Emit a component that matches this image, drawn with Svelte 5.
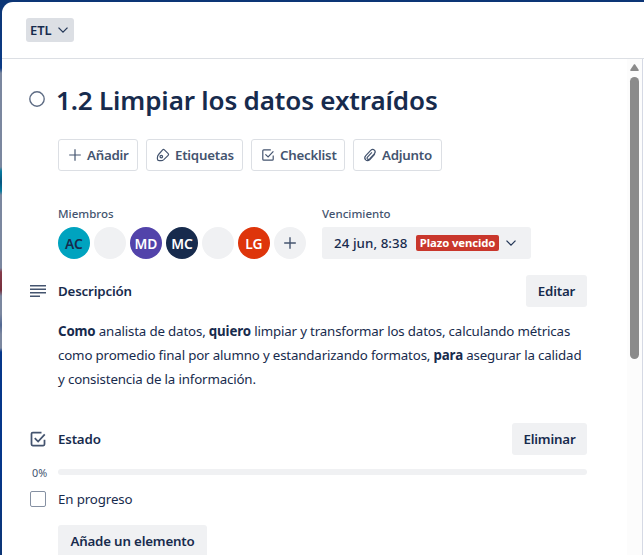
<script>
  const members = [
    { initials: 'AC', bg: '#00a3bf', fg: '#172b4d' },
    { initials: '', bg: '#f0f1f3', fg: '#172b4d' },
    { initials: 'MD', bg: '#5243aa', fg: '#ffffff' },
    { initials: 'MC', bg: '#172b4d', fg: '#ffffff' },
    { initials: '', bg: '#f0f1f3', fg: '#172b4d' },
    { initials: 'LG', bg: '#de350b', fg: '#ffffff' }
  ];
</script>

{#snippet chevron()}
  <svg class="chevron" width="12" height="8" viewBox="0 0 12 8"><path d="M1.500 1.600 6 6.100l4.500-4.500" /></svg>
{/snippet}

{#snippet check(size)}
  <svg width={size} height={size} viewBox="0 0 16 16"><path d="M13.200 8.500v3.700q0 1-1 1H3.800q-1 0-1-1V3.800q0-1 1-1h7" /><path d="m5.400 7.300 2.700 2.700 5.300-5.700" /></svg>
{/snippet}

<div class="backdrop">
  <div class="card">
    <header>
      <button class="list">ETL {@render chevron()}</button>
    </header>
    <div class="body">
      <main>
        <div class="title">
          <svg class="circle" width="16" height="16" viewBox="0 0 16 16"><circle cx="8" cy="8" r="7.200" /></svg>
          <h1>1.2 Limpiar los datos extraídos</h1>
        </div>

        <div class="actions">
          <button class="add">
            <svg width="16" height="16" viewBox="0 0 16 16"><path d="M8 2.200v11.600M2.200 8h11.600" /></svg>
            <span>Añadir</span>
          </button>
          <button class="tags">
            <svg width="16" height="16" viewBox="0 0 16 16"><path d="M7.600 2.800q.9-.9 1.800 0l3.800 3.800q.8.900 0 1.700l-4.400 4.300q-1.300 1.200-3 1.100H4.200q-1.700 0-1.800-1.700v-1.300q0-1.900 1.200-3.200Z" /><circle cx="6.300" cy="9.600" r="1.300" /></svg>
            <span>Etiquetas</span>
          </button>
          <button class="checklist">{@render check(16)}<span>Checklist</span></button>
          <button class="attach">
            <svg width="16" height="16" viewBox="0 0 16 16"><path d="m12.800 7.200-4.900 5.300q-2.200 2.200-4.200.4-2-2 .1-4.300l4.900-5.200q1.900-1.900 3.700-.3 1.700 1.700-.1 3.700l-4.700 5q-1.200 1.200-2.100.3-1-.9.2-2.200l4.200-4.500" /></svg>
            <span>Adjunto</span>
          </button>
        </div>

        <div class="details">
          <section class="members">
            <h3>Miembros</h3>
            <div class="avatars">
              {#each members as m}
                <span class="avatar" style="background:{m.bg};color:{m.fg}">{m.initials}</span>
              {/each}
              <button class="avatar more" aria-label="Añadir miembro">
                <svg width="16" height="16" viewBox="0 0 16 16"><path d="M8 2.200v11.600M2.200 8h11.600" /></svg>
              </button>
            </div>
          </section>
          <section>
            <h3>Vencimiento</h3>
            <button class="due">
              <span class="date">24 jun, 8:38</span>
              <span class="late">Plazo vencido</span>
              {@render chevron()}
            </button>
          </section>
        </div>

        <div class="heading">
          <svg class="lines" width="16" height="12" viewBox="0 0 16 12"><path d="M0 .8h16M0 4.300h16M0 7.800h16M0 11.200h10" /></svg>
          <h2>Descripción</h2>
          <button class="solid edit">Editar</button>
        </div>
        <div class="description">
          <p><b>Como</b> analista de datos, <b>quiero</b> limpiar y transformar los datos, calculando métricas</p>
          <p>como promedio final por alumno y estandarizando formatos, <b>para</b> asegurar la calidad</p>
          <p>y consistencia de la información.</p>
        </div>

        <div class="heading state">
          {@render check(20)}
          <h2>Estado</h2>
          <button class="solid remove">Eliminar</button>
        </div>
        <div class="progress"><span>0%</span><div class="track"></div></div>
        <div class="item"><span class="box"></span><span class="item-text">En progreso</span></div>
        <button class="solid new">Añade un elemento</button>
      </main>
      <div class="scroll">
        <svg width="9" height="7" viewBox="0 0 9 7"><path d="M4 .3h1L8.800 6q.2 1-.8 1H1Q0 7 .2 6Z" /></svg>
        <div class="thumb"></div>
      </div>
    </div>
  </div>
</div>

<style>
  :global(body) { margin: 0; overflow: hidden; }
  * { box-sizing: border-box; }
  .backdrop {
    width: 644px; height: 555px; padding: 2px 0 0 2px; overflow: hidden;
    font-family: "Noto Sans", "Open Sans", sans-serif; font-size: 13.300px; color: #172b4d;
    background: linear-gradient(#0c3575 0, #0b3b86 68px, #7b879f 73px, #7b879f 167px, #087b9f 171px, #075580 182px, #087b9f 191px, #7b879f 195px, #7b879f 268px, #853c4b 272px, #762f3c 290px, #7b879f 296px, #7b879f 314px, #526894 325px, #7b879f 334px, #7b879f 348px, #05368a 352px, #05368a 470px, #0c3575 555px);
  }
  .card { height: 553px; background: #fff; border-radius: 11px 0 0 0; overflow: hidden; }
  header { height: 57px; padding: 16px 24px; border-bottom: 1px solid #dcdfe4; }
  button { font: inherit; color: inherit; border: 0; padding: 0; margin: 0; display: flex; align-items: center; white-space: nowrap; flex-shrink: 0; }
  svg { fill: none; stroke: #44546f; stroke-width: 1.400; flex-shrink: 0; display: block; }
  .chevron { stroke: #253858; stroke-width: 1.300; }
  .list { width: 48px; height: 24px; padding: 0 5px 0 4px; justify-content: space-between; background: #dcdfe4; border-radius: 3px; font-weight: 600; font-size: 13px; letter-spacing: -.1px; }
  .body { display: flex; height: 496px; }
  main { width: 585px; margin-right: 40px; flex-shrink: 0; }
  .title { display: flex; height: 80px; padding: 23px 0 0 27px; }
  .circle { stroke: #5e6c84; margin: 9px 12px 0 0; }
  h1 { margin: 0; font-size: 26px; line-height: 36px; font-weight: 600; white-space: nowrap; letter-spacing: -.100px; word-spacing: -.300px; margin-left: -1px; }
  .actions { display: flex; gap: 8px; padding-left: 56px; }
  .actions button { height: 32px; border: 1px solid #dcdfe4; border-radius: 3px; background: #fff; padding-left: 8px; gap: 4px; font-weight: 600; letter-spacing: -.240px; color: #44546f; }
  .actions svg { stroke-width: 1.200; }
  .add { width: 80px; }
  .tags { width: 97px; }
  .checklist { width: 94px; }
  .attach { width: 89px; }
  .details { display: flex; padding: 34px 0 0 56px; }
  .members { width: 264px; }
  h3 { margin: 0 0 4px; font-size: 11.500px; line-height: 18px; font-weight: 500; color: #44546f; }
  .avatars { display: flex; gap: 4px; }
  .avatar { width: 32px; height: 32px; border-radius: 50%; display: flex; align-items: center; justify-content: center; font-weight: 600; font-size: 13.800px; }
  .more { background: #f0f1f3; }
  .due { width: 209px; height: 32px; padding-left: 12px; background: #f0f1f3; border-radius: 3px; font-weight: 500; }
  .date { width: 82px; text-align: left; letter-spacing: .08px; }
  .late { width: 83px; height: 16px; line-height: 16px; background: #c9372c; color: #fff; border-radius: 2px; font-size: 11.300px; font-weight: 700; text-align: center; margin-right: 6px; letter-spacing: -.1px; }
  .heading { display: flex; align-items: center; height: 32px; margin-top: 16px; padding-left: 28px; }
  h2 { margin: 0; font-size: 13.300px; font-weight: 600; letter-spacing: -.170px; flex: 1; }
  .lines { margin-right: 12px; stroke-width: 1.600; }
  .solid { height: 32px; background: #f0f1f3; border-radius: 3px; font-weight: 600; letter-spacing: -.170px; justify-content: center; }
  .edit { width: 61px; }
  .description { padding: 12px 0 0 56px; height: 84px; }
  p { margin: 0; line-height: 24px; white-space: nowrap; letter-spacing: -.160px; }
  b { font-weight: 700; }
  .state { margin-top: 32px; padding-left: 26px; }
  .state svg { margin-right: 10px; }
  .remove { width: 75px; }
  .progress { display: flex; align-items: center; height: 34px; padding-left: 30px; }
  .progress span { width: 26px; font-size: 10.800px; color: #44546f; }
  .track { height: 6px; flex: 1; border-radius: 3px; background: #f0f1f3; }
  .item { display: flex; align-items: center; height: 20px; padding-left: 28px; }
  .item-text { letter-spacing: -.120px; }
  .box { width: 16px; height: 16px; border: 1px solid #8590a2; border-radius: 2px; margin-right: 12px; }
  .new { width: 149px; margin: 16px 0 0 56px; }
  .scroll { width: 16px; border-right: 1px solid #d5d9e4; background: #fcfcfc; display: flex; flex-direction: column; align-items: center; padding-top: 5px; }
  .scroll svg { fill: #8b8b8b; stroke: none; }
  .thumb { width: 9px; height: 282px; margin-top: 6px; background: #8b8b8b; border-radius: 5px; }
</style>
